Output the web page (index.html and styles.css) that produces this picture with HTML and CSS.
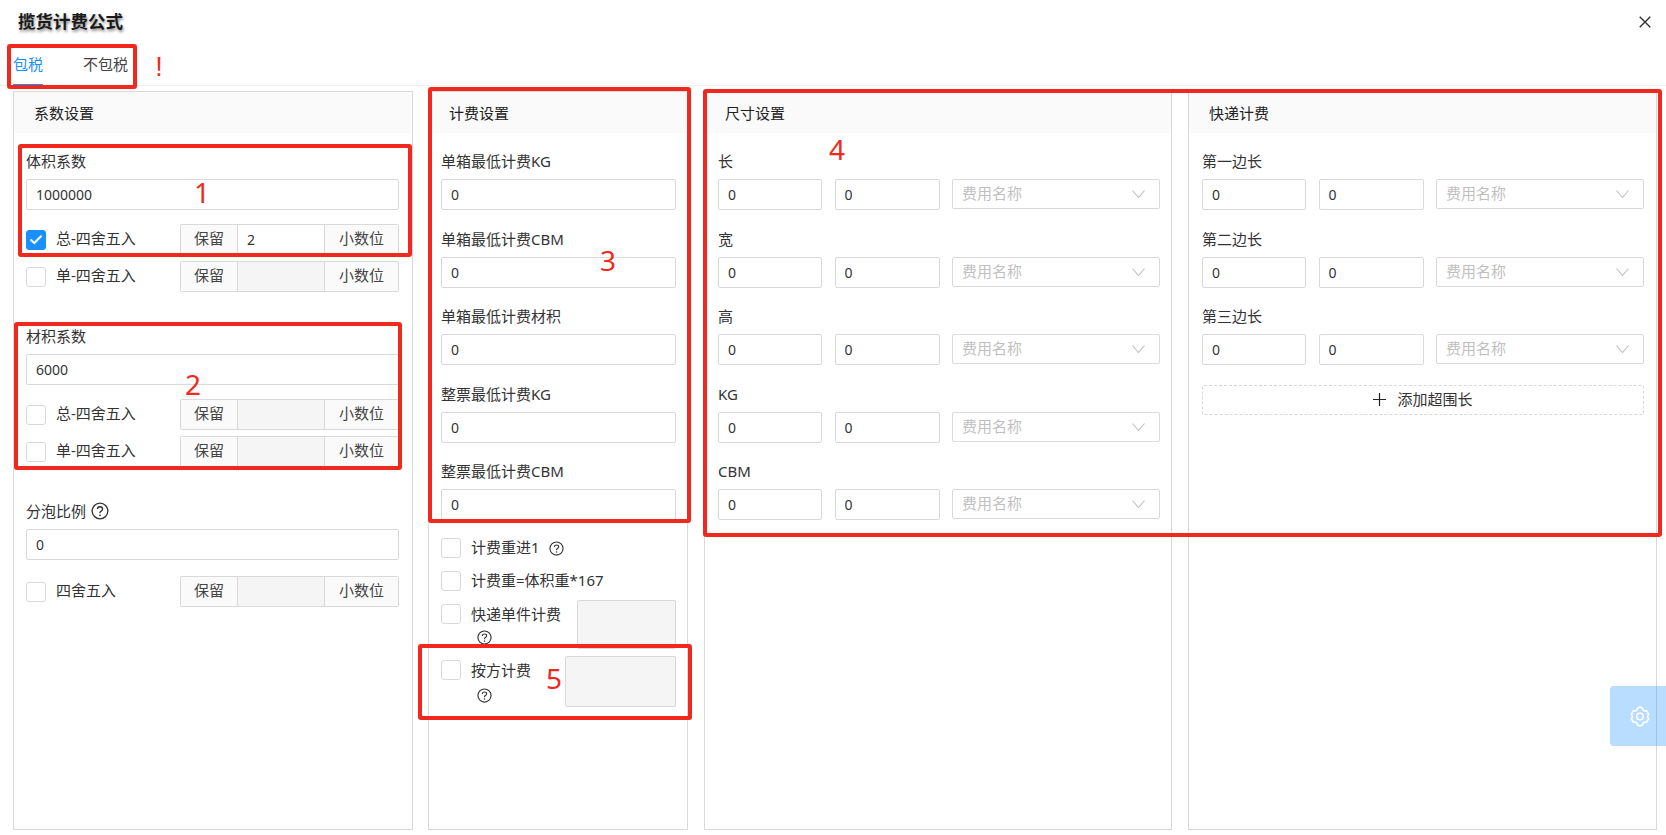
FILE: index.html
```html
<!DOCTYPE html>
<html lang="zh-CN">
<head>
<meta charset="utf-8">
<title>揽货计费公式</title>
<link rel="stylesheet" href="styles.css">
</head>
<body>
<svg class="sprites" width="0" height="0" aria-hidden="true">
  <symbol id="help" viewBox="0 0 16 16">
    <circle cx="8" cy="8" r="7" fill="none" stroke="#333" stroke-width="1.2"/>
    <path d="M5.7 6.3C5.7 5 6.7 4.2 8 4.2s2.300.8 2.300 2c0 1-.6 1.500-1.300 1.900-.7.4-1 .8-1 1.500v.3" fill="none" stroke="#333" stroke-width="1.200"/>
    <circle cx="8" cy="11.800" r=".8" fill="#333"/>
  </symbol>
  <symbol id="chev" viewBox="0 0 13 8">
    <path d="M.5.500 6.500 7.500 12.500.5" fill="none" stroke="#bfbfbf" stroke-width="1.100"/>
  </symbol>
</svg>

<header class="title-bar">
  <h1 class="title">揽货计费公式</h1>
  <button class="close" aria-label="关闭">
    <svg width="12" height="12" viewBox="0 0 12 12"><path d="M.7.700 11.300 11.300M11.300.7.700 11.300" stroke="#2b2b2b" stroke-width="1.300" fill="none"/></svg>
  </button>
</header>

<nav class="tabs">
  <span class="tab active">包税</span>
  <span class="tab">不包税</span>
</nav>

<main class="panels">
  <section class="panel p-coef">
    <h2 class="panel-head">系数设置</h2>
    <div class="panel-body">
      <div class="field">
        <label class="label">体积系数</label>
        <input class="input" value="1000000">
      </div>
      <div class="round-row first">
        <span class="check on"><svg width="14" height="11" viewBox="0 0 14 11"><path d="M1.500 5.500 5.300 9 12.500 1.800" fill="none" stroke="#fff" stroke-width="2"/></svg></span>
        <span class="check-text">总-四舍五入</span>
        <div class="keep"><span class="addon a-l">保留</span><input class="keep-input" value="2"><span class="addon a-r">小数位</span></div>
      </div>
      <div class="round-row">
        <span class="check"></span>
        <span class="check-text">单-四舍五入</span>
        <div class="keep"><span class="addon a-l">保留</span><span class="keep-input off"></span><span class="addon a-r">小数位</span></div>
      </div>

      <div class="field block-gap">
        <label class="label">材积系数</label>
        <input class="input" value="6000">
      </div>
      <div class="round-row first">
        <span class="check"></span>
        <span class="check-text">总-四舍五入</span>
        <div class="keep"><span class="addon a-l">保留</span><span class="keep-input off"></span><span class="addon a-r">小数位</span></div>
      </div>
      <div class="round-row">
        <span class="check"></span>
        <span class="check-text">单-四舍五入</span>
        <div class="keep"><span class="addon a-l">保留</span><span class="keep-input off"></span><span class="addon a-r">小数位</span></div>
      </div>

      <div class="field block-gap">
        <label class="label">分泡比例<svg class="help big"><use href="#help"/></svg></label>
        <input class="input" value="0">
      </div>
      <div class="round-row third">
        <span class="check"></span>
        <span class="check-text">四舍五入</span>
        <div class="keep"><span class="addon a-l">保留</span><span class="keep-input off"></span><span class="addon a-r">小数位</span></div>
      </div>
    </div>
  </section>

  <section class="panel p-fee">
    <h2 class="panel-head">计费设置</h2>
    <div class="panel-body">
      <div class="field"><label class="label">单箱最低计费KG</label><input class="input" value="0"></div>
      <div class="field"><label class="label">单箱最低计费CBM</label><input class="input" value="0"></div>
      <div class="field"><label class="label">单箱最低计费材积</label><input class="input" value="0"></div>
      <div class="field"><label class="label">整票最低计费KG</label><input class="input" value="0"></div>
      <div class="field"><label class="label">整票最低计费CBM</label><input class="input" value="0"></div>

      <div class="opt o-first">
        <span class="check"></span>
        <span class="check-text">计费重进1</span>
        <svg class="help after"><use href="#help"/></svg>
      </div>
      <div class="opt o-second">
        <span class="check"></span>
        <span class="check-text">计费重=体积重*167</span>
      </div>
      <div class="opt-box o-third">
        <span class="check"></span>
        <div class="stack">
          <span class="check-text">快递单件计费</span>
          <svg class="help under"><use href="#help"/></svg>
        </div>
        <span class="grey-box g-a"></span>
      </div>
      <div class="opt-box o-fourth">
        <span class="check"></span>
        <div class="stack">
          <span class="check-text">按方计费</span>
          <svg class="help under"><use href="#help"/></svg>
        </div>
        <span class="grey-box g-b"></span>
      </div>
    </div>
  </section>

  <section class="panel p-size">
    <h2 class="panel-head">尺寸设置</h2>
    <div class="panel-body">
      <div class="field"><label class="label">长</label><div class="triple"><input class="input" value="0"><input class="input" value="0"><div class="select"><span>费用名称</span><svg width="13" height="8"><use href="#chev"/></svg></div></div></div>
      <div class="field"><label class="label">宽</label><div class="triple"><input class="input" value="0"><input class="input" value="0"><div class="select"><span>费用名称</span><svg width="13" height="8"><use href="#chev"/></svg></div></div></div>
      <div class="field"><label class="label">高</label><div class="triple"><input class="input" value="0"><input class="input" value="0"><div class="select"><span>费用名称</span><svg width="13" height="8"><use href="#chev"/></svg></div></div></div>
      <div class="field"><label class="label">KG</label><div class="triple"><input class="input" value="0"><input class="input" value="0"><div class="select"><span>费用名称</span><svg width="13" height="8"><use href="#chev"/></svg></div></div></div>
      <div class="field"><label class="label">CBM</label><div class="triple"><input class="input" value="0"><input class="input" value="0"><div class="select"><span>费用名称</span><svg width="13" height="8"><use href="#chev"/></svg></div></div></div>
    </div>
  </section>

  <section class="panel p-express">
    <h2 class="panel-head">快递计费</h2>
    <div class="panel-body">
      <div class="field"><label class="label">第一边长</label><div class="triple"><input class="input" value="0"><input class="input" value="0"><div class="select"><span>费用名称</span><svg width="13" height="8"><use href="#chev"/></svg></div></div></div>
      <div class="field"><label class="label">第二边长</label><div class="triple"><input class="input" value="0"><input class="input" value="0"><div class="select"><span>费用名称</span><svg width="13" height="8"><use href="#chev"/></svg></div></div></div>
      <div class="field"><label class="label">第三边长</label><div class="triple"><input class="input" value="0"><input class="input" value="0"><div class="select"><span>费用名称</span><svg width="13" height="8"><use href="#chev"/></svg></div></div></div>
      <button class="add">
        <svg width="13" height="13" viewBox="0 0 13 13"><path d="M6.500 0V13M0 6.500H13" stroke="#222" stroke-width="1.200" fill="none"/></svg>
        <span class="add-text">添加超围长</span>
      </button>
    </div>
  </section>
</main>

<button class="float-btn" aria-label="设置">
  <svg width="22" height="23" viewBox="0 0 24 24" fill="none" stroke="#fff" stroke-width="1.700" stroke-linejoin="round">
    <path d="M12 1.500 15 3.300 15.400 5.100 17.100 6.100 18.900 5.500 21.600 9.800 20.300 11 20.300 13 21.600 14.200 18.900 18.500 17.100 17.900 15.400 18.900 15 20.700 12 22.500 9 20.700 8.600 18.900 6.900 17.900 5.100 18.500 2.400 14.200 3.700 13 3.700 11 2.400 9.800 5.100 5.500 6.900 6.100 8.600 5.100 9 3.300Z"/>
    <circle cx="12" cy="12" r="3.600"/>
  </svg>
</button>

<div class="mark m-tabs"></div>
<div class="mark m-1"></div>
<div class="mark m-2"></div>
<div class="mark m-3"></div>
<div class="mark m-4"></div>
<div class="mark m-5"></div>
<span class="note n-bang">!</span>
<span class="note n-1">1</span>
<span class="note n-2">2</span>
<span class="note n-3">3</span>
<span class="note n-4">4</span>
<span class="note n-5">5</span>
</body>
</html>
```
FILE: styles.css
```css
* { box-sizing: border-box; }
html, body { height: 100%; }
body {
  margin: 0;
  position: relative;
  overflow: hidden;
  background: #fff;
  color: #333;
  font-family: "Noto Sans", "Noto Sans CJK SC", sans-serif;
  font-size: 15px;
}
.sprites { position: absolute; }

.title-bar {
  height: 44px;
  padding-left: 18px;
  display: flex;
  align-items: center;
  justify-content: space-between;
}
.title {
  margin: 0;
  padding-bottom: 3px;
  font-size: 17.500px;
  font-weight: 700;
  color: #1a1a1a;
  text-shadow: 1px 2px 3px rgba(0, 0, 0, .45);
}
.close {
  margin-right: 15px;
  padding: 0;
  border: 0;
  background: none;
  display: flex;
}

.tabs {
  height: 42px;
  padding-left: 13px;
  display: flex;
  gap: 40px;
  border-bottom: 1px solid #f0f0f0;
}
.tab {
  height: 42px;
  line-height: 40px;
  color: #444;
}
.tab.active {
  color: #1890ff;
  border-bottom: 2px solid #1890ff;
}

.panels {
  margin-top: 5px;
  padding-left: 13px;
  display: flex;
}
.panel {
  height: 739px;
  border: 1px solid #d9d9d9;
}
.p-coef { width: 400px; margin-right: 15px; }
.p-fee { width: 260px; margin-right: 16px; }
.p-size { width: 468px; margin-right: 16px; }
.p-express { width: 469px; }

.panel-head {
  margin: 0;
  height: 41px;
  padding-left: 20px;
  background: #fafafa;
  font-size: 15px;
  font-weight: 400;
  line-height: 42px;
  color: #222;
}
.panel-body { padding: 19px 13px 0 12px; }
.p-fee .panel-body { padding-right: 11px; }
.p-size .panel-body { padding: 19px 11px 0 13px; }
.p-express .panel-body { padding: 19px 12px 0 13px; }

.field { margin-bottom: 19.500px; }
.label {
  display: flex;
  align-items: center;
  height: 22px;
  padding-bottom: 4px;
  line-height: 18px;
  margin-bottom: 5px;
  color: #333;
}
.input {
  display: block;
  width: 100%;
  height: 31px;
  padding: 0 9px;
  border: 1px solid #d9d9d9;
  border-radius: 2px;
  background: #fff;
  color: #333;
  font: 14px "Noto Sans", sans-serif;
  outline: 0;
}

.check {
  flex: none;
  width: 20px;
  height: 20px;
  border: 1px solid #d9d9d9;
  border-radius: 3px;
  background: #fff;
  display: flex;
  align-items: center;
  justify-content: center;
}
.check.on { background: #1890ff; border-color: #1890ff; }
.check-text {
  display: block;
  height: 22px;
  padding-bottom: 4px;
  line-height: 18px;
  color: #333;
  white-space: nowrap;
}

.round-row {
  display: flex;
  align-items: center;
  height: 31px;
  margin-bottom: 6px;
}
.round-row.first { margin-top: -5.500px; }
.round-row.third { margin-top: -3.500px; }
.round-row .check-text { margin-left: 10px; }
.keep {
  margin-left: auto;
  width: 219px;
  height: 31px;
  display: flex;
  border: 1px solid #d9d9d9;
  border-radius: 2px;
}
.addon {
  flex: none;
  background: #fafafa;
  text-align: center;
  line-height: 27px;
  color: #444;
}
.a-l { width: 57px; border-right: 1px solid #d9d9d9; }
.a-r { width: 74px; border-left: 1px solid #d9d9d9; }
.keep-input {
  flex: 1;
  min-width: 0;
  padding: 0 9px;
  border: 0;
  background: #fff;
  color: #333;
  font: 14px "Noto Sans", sans-serif;
  outline: 0;
}
.keep-input.off { background: #f5f5f5; }
.block-gap { margin-top: 35px; }

.help { display: block; width: 15px; height: 15px; flex: none; }
.help.big { width: 18px; height: 18px; margin-left: 5px; }
.help.after { margin-left: 9px; }
.help.under { margin: 3px 0 0 6px; }

.opt { display: flex; align-items: center; height: 20px; }
.opt > .check-text { margin-left: 10px; padding-bottom: 1px; line-height: 21px; }
.o-first { margin-top: -1.500px; }
.o-second { margin-top: 13px; }
.opt-box { display: flex; align-items: flex-start; }
.opt-box > .check { margin: 4px 10px 0 0; }
.stack { margin-top: 5px; }
.o-third { margin-top: 9px; }
.o-fourth { margin-top: 7px; }
.o-fourth .help.under { margin-top: 5px; }
.grey-box {
  margin-left: auto;
  border: 1px solid #d9d9d9;
  border-radius: 2px;
  background: #f5f5f5;
}
.g-a { width: 99px; height: 49px; }
.g-b { width: 111px; height: 51px; }

.triple {
  display: grid;
  grid-template-columns: 104px 105px 1fr;
  gap: 12.500px;
}
.select {
  height: 30px;
  padding: 0 14px 0 9px;
  border: 1px solid #d9d9d9;
  border-radius: 2px;
  background: #fff;
  color: #bfbfbf;
  display: flex;
  align-items: center;
  justify-content: space-between;
}
.select span { padding-bottom: 3px; }
.select svg { display: block; }

.add {
  width: 100%;
  height: 30px;
  margin-top: 0;
  padding: 0;
  border: 1px dashed #d9d9d9;
  border-radius: 2px;
  background: #fff;
  color: #333;
  font: inherit;
  display: flex;
  align-items: center;
  justify-content: center;
  gap: 11px;
}
.add-text { padding-bottom: 3px; }

/* over the panels */
.float-btn {
  position: absolute;
  left: 1610px;
  top: 686px;
  width: 56px;
  height: 60px;
  padding: 0 0 0 4px;
  border: 0;
  border-radius: 4px 0 0 4px;
  background: rgba(24, 144, 255, .3);
  display: flex;
  align-items: center;
  justify-content: center;
}

/* red review annotations */
.mark {
  position: absolute;
  border: 4px solid #f0281e;
  border-radius: 3px;
}
.m-tabs { left: 7px; top: 44px; width: 130px; height: 45px; }
.m-1 { left: 18px; top: 144px; width: 394px; height: 113px; }
.m-2 { left: 14px; top: 322px; width: 388px; height: 148px; }
.m-3 { left: 428px; top: 87px; width: 263px; height: 436px; }
.m-4 { left: 703px; top: 89px; width: 959px; height: 448px; }
.m-5 { left: 418px; top: 644px; width: 274px; height: 76px; }
.note {
  position: absolute;
  width: 30px;
  height: 36px;
  margin: -18px 0 0 -15px;
  text-align: center;
  color: #ee2a20;
  font: 28px/36px "Noto Sans", sans-serif;
}
.n-bang { left: 159px; top: 67px; font-family: "Liberation Sans", sans-serif; font-size: 27px; }
.n-1 { left: 202px; top: 192px; }
.n-2 { left: 193px; top: 384px; }
.n-3 { left: 608px; top: 260px; }
.n-4 { left: 837px; top: 149px; }
.n-5 { left: 554px; top: 678px; }
```
